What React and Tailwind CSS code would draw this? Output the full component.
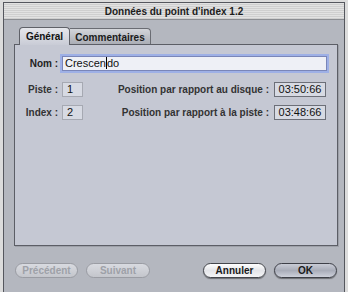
import React from 'react';

const font = "font-['Liberation_Sans',Arial,sans-serif]";

const Pill = ({ label, disabled, primary, width }) => (
  <button
    className={`h-[15px] ${width} rounded-full border text-[10px] font-bold leading-none flex items-center justify-center ${
      disabled
        ? 'border-[#9a9ca3] text-[#9ea1a8] bg-gradient-to-b from-[#d8dae0] to-[#c4c6cc]'
        : primary
        ? 'border-[#3e4048] text-[#1a1a1a] bg-gradient-to-b from-[#c9ccd6] via-[#a9adb9] to-[#cdd0da] shadow-[0_1px_1px_rgba(0,0,0,0.4)]'
        : 'border-[#44464c] text-[#1a1a1a] bg-gradient-to-b from-[#ffffff] via-[#e4e5e9] to-[#f4f4f6] shadow-[0_1px_1px_rgba(0,0,0,0.4)]'
    }`}
  >
    {label}
  </button>
);

const ValueBox = ({ value, className }) => (
  <div
    className={`h-[15px] border border-[#6c6f78] bg-[#d7dae3] text-[11px] text-[#111] flex items-center ${className}`}
  >
    {value}
  </div>
);

export default function App() {
  return (
    <div className={`w-[348px] h-[292px] bg-[#dcdcdc] pl-[3px] pr-[3px] pt-[2px] ${font}`}>
      <div className="h-full flex flex-col border-l border-r border-t border-[#55575e]">
        {/* title bar */}
        <div className="h-[17px] flex items-center justify-center bg-[repeating-linear-gradient(180deg,#e2e2e2_0px,#e2e2e2_1px,#cfcfcf_1px,#cfcfcf_2px)] border-b border-[#8b8d92]">
          <span className="text-[10px] font-bold text-[#1c1c1c]">Données du point d'index 1.2</span>
        </div>

        <div className="flex-1 bg-[#b4b7bf] pl-[10px] pr-[6px] pt-[7px] flex flex-col">
          {/* tabs */}
          <div className="flex pl-[5px] h-[18px] items-end">
            <div className="h-[18px] w-[51px] border border-b-0 border-[#5f6168] rounded-t-[4px] bg-gradient-to-b from-[#e6e7ec] to-[#c9ccd6] text-[10px] font-bold text-[#111] flex items-center justify-center relative z-10">
              Général
            </div>
            <div className="h-[17px] w-[81px] border border-l-0 border-b-0 border-[#6a6c73] rounded-tr-[4px] bg-gradient-to-b from-[#d3d5da] to-[#a8abb3] text-[10px] font-bold text-[#1a1a1a] flex items-center justify-center">
              Commentaires
            </div>
          </div>

          {/* panel */}
          <div className="h-[202px] -mt-px border border-[#5c5e66] bg-[#c5c8d3] shadow-[1px_1px_0_#9ea1a9] pt-[10px] pl-[8px] pr-[10px]">
            <div className="flex items-center h-[16px]">
              <span className="w-[38px] text-right pr-[3px] text-[10px] font-bold text-[#222] whitespace-nowrap">Nom :</span>
              <div className="ml-[1px] flex-1 h-[15px] border border-[#7a86b8] shadow-[0_0_0_2px_#9eb0e6] bg-[#eef0f6] text-[11px] text-[#111] flex items-center pl-[2px]">
                Crescen<span className="w-px h-[12px] bg-black"></span>do
              </div>
            </div>

            <div className="flex items-center mt-[10px] h-[16px]">
              <span className="w-[38px] text-right pr-[3px] text-[10px] font-bold text-[#333] whitespace-nowrap">Piste :</span>
              <ValueBox value="1" className="ml-[1px] w-[21px] pl-[4px] border-[#a6a9b2] bg-[#c5c8d3]" />
              <span className="ml-auto pr-[5px] text-[10px] font-bold text-[#333] whitespace-nowrap">Position par rapport au disque :</span>
              <ValueBox value="03:50:66" className="w-[52px] justify-center mr-[1px]" />
            </div>

            <div className="flex items-center mt-[7px] h-[16px]">
              <span className="w-[38px] text-right pr-[3px] text-[10px] font-bold text-[#333] whitespace-nowrap">Index :</span>
              <ValueBox value="2" className="ml-[1px] w-[21px] pl-[4px] border-[#a6a9b2] bg-[#c5c8d3]" />
              <span className="ml-auto pr-[5px] text-[10px] font-bold text-[#333] whitespace-nowrap">Position par rapport à la piste :</span>
              <ValueBox value="03:48:66" className="w-[52px] justify-center mr-[1px]" />
            </div>
          </div>

          {/* buttons */}
          <div className="flex items-center mt-[17px] pl-[1px] pr-[1px]">
            <Pill label="Précédent" disabled width="w-[63px]" />
            <div className="ml-[8px]">
              <Pill label="Suivant" disabled width="w-[64px]" />
            </div>
            <div className="ml-auto">
              <Pill label="Annuler" width="w-[63px]" />
            </div>
            <div className="ml-[8px]">
              <Pill label="OK" primary width="w-[63px]" />
            </div>
          </div>
        </div>
      </div>
    </div>
  );
}
